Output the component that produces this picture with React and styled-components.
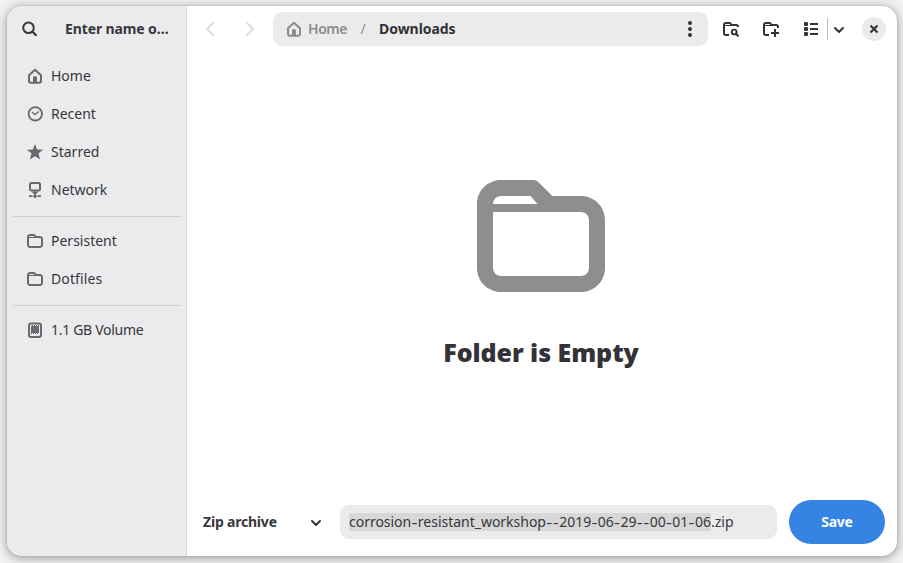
import React from "react";
import styled, { createGlobalStyle } from "styled-components";

const GlobalStyle = createGlobalStyle`
  * { box-sizing: border-box; }
  html, body, #root { height: 100%; }
  body {
    margin: 0;
    overflow: hidden;
    background: #f2f2f2;
    color: #37373b;
    font-family: "Noto Sans", "Open Sans", sans-serif;
    font-size: 14px;
    line-height: 20px;
  }
  button { font: inherit; color: inherit; border: 0; padding: 0; background: none; }
`;

const Desktop = styled.div`
  height: 100%;
  padding: 6px 6px 7px 7px;
`;

const Dialog = styled.div`
  display: flex;
  height: 100%;
  border-radius: 15px;
  overflow: hidden;
  background: #fff;
  box-shadow: 0 0 2px rgba(0, 0, 0, 0.15), 0 2px 9px 1px rgba(0, 0, 0, 0.26), 0 0 16px 2px rgba(0, 0, 0, 0.07);
`;

const Sidebar = styled.aside`
  width: 180px;
  flex: none;
  background: #ebebed;
  border-right: 1px solid #dadadc;
`;

const SidebarHeader = styled.header`
  display: flex;
  align-items: center;
  height: 46px;
  padding-left: 14px;
  margin-bottom: 5px;
`;

const Title = styled.h1`
  margin: 0 0 0 28px;
  font-size: 14px;
  font-weight: 700;
  white-space: nowrap;
`;

const Text = styled.span`
  letter-spacing: ${(p) => p.$track || 0}px;
  white-space: nowrap;
`;

const Place = styled.div`
  display: flex;
  align-items: center;
  gap: 8px;
  height: 38px;
  padding-left: 20px;
  svg { color: #69696d; }
`;

const Separator = styled.hr`
  height: 1px;
  margin: 7px 5px 5px 6px;
  border: 0;
  background: #cfcfd1;
`;

const Main = styled.main`
  display: flex;
  flex: 1;
  flex-direction: column;
  min-width: 0;
`;

const Toolbar = styled.header`
  display: flex;
  align-items: center;
  height: 46px;
`;

const IconButton = styled.button`
  display: flex;
  align-items: center;
  justify-content: center;
  flex: none;
  width: ${(p) => p.$w || 40}px;
  height: 34px;
  color: ${(p) => (p.disabled ? "#dcdcdd" : "#323237")};
`;

const History = styled.div`
  display: flex;
  padding-left: 3px;
  width: 86px;
`;

const PathBar = styled.nav`
  display: flex;
  align-items: center;
  width: 435px;
  height: 34px;
  margin-right: 3px;
  padding-left: 13px;
  border-radius: 9px;
  background: #ebebeb;
`;

const Crumb = styled.span`
  display: flex;
  align-items: center;
  gap: 6px;
  font-weight: ${(p) => (p.$current ? 700 : 600)};
  color: ${(p) => (p.$current ? "#323237" : "#8c8c8e")};
`;

const Slash = styled.span`
  width: 32px;
  text-align: center;
  color: #909092;
`;

const MenuSlot = styled.div`
  display: flex;
  margin-left: auto;
  margin-right: 1px;
`;

const ViewDivider = styled.span`
  width: 1px;
  height: 22px;
  margin-left: -4px;
  background: #bebec0;
`;

const CloseButton = styled.button`
  display: flex;
  align-items: center;
  justify-content: center;
  width: 24px;
  height: 24px;
  margin-left: 13px;
  border-radius: 50%;
  background: #ebebeb;
`;

const EmptyState = styled.section`
  display: flex;
  flex: 1;
  flex-direction: column;
  align-items: center;
  padding: 120px 2px 0 0;
  svg { color: #8e8e91; }
`;

const EmptyHeading = styled.h2`
  margin: 34px 0 0;
  font-size: 25px;
  line-height: 36px;
  font-weight: 900;
  color: #323237;
`;

const ActionBar = styled.footer`
  display: flex;
  align-items: center;
  height: 68px;
  padding: 0 12px 0 16px;
`;

const FilterButton = styled.button`
  display: flex;
  align-items: center;
  justify-content: space-between;
  width: 121px;
  margin-right: 16px;
  font-weight: 700;
`;

const FilenameField = styled.div`
  display: flex;
  align-items: center;
  width: 437px;
  height: 34px;
  padding-left: 9px;
  border-radius: 9px;
  background: #ebebeb;
`;

const Selection = styled.span`
  display: block;
  width: 362px;
  height: 18px;
  line-height: 18px;
  white-space: nowrap;
  background: #d7d7d7;
`;

const Hyphen = styled.span`
  font-family: Inter, sans-serif;
  letter-spacing: 0.2px;
  line-height: 1;
  vertical-align: -1px;
`;

const SaveButton = styled.button`
  width: 96px;
  height: 44px;
  margin-left: 12px;
  border-radius: 22px;
  background: #3584e4;
  color: #fff;
  font-weight: 700;
`;

const Icon = ({ size = 16, children }) => (
  <svg width={size} height={size} viewBox="0 0 16 16" fill="none" stroke="currentColor" strokeWidth="2">
    {children}
  </svg>
);

const SearchIcon = () => (
  <Icon><circle cx="7.5" cy="6.7" r="5.3" /><path d="m11.5 10.7 3.3 3.3" strokeWidth="2.2" strokeLinecap="round" /></Icon>
);
const HomeIcon = () => (
  <Icon>
    <path d="M2 7.2 8 1.8l6 5.4V12.8q0 2-2 2H4q-2 0-2-2z" strokeLinejoin="round" />
    <path d="M6 15v-5q0-2 2-2t2 2V15z" fill="currentColor" stroke="none" />
  </Icon>
);
const RecentIcon = () => (
  <Icon><circle cx="8.3" cy="7.8" r="6.7" strokeWidth="1.8" /><path d="m5 5.8 2.8 2.8 4.1-3.1" strokeWidth="1.2" /></Icon>
);
const StarIcon = () => (
  <Icon>
    <path
      d="m8 0 2.1 5.4 5.9.3-4.6 3.8 1.8 5.9L8 12.2l-5.2 3.2 1.8-5.9L0 5.7l5.9-.3z"
      fill="currentColor"
      stroke="none"
    />
  </Icon>
);
const NetworkIcon = () => (
  <Icon>
    <rect x="3" y="1" width="10" height="7.5" rx="1.5" />
    <path d="M4.5 9.5h7L9 12v1H7v-1z" fill="currentColor" stroke="none" />
    <path d="M2 14.2h3.5m5 0H14" strokeWidth="1.8" />
    <circle cx="8" cy="14.2" r="1.7" fill="currentColor" stroke="none" />
  </Icon>
);
const FolderIcon = ({ size }) => (
  <Icon size={size}>
    <path
      fill="currentColor"
      stroke="none"
      fillRule="evenodd"
      d="M3 1C1.34 1 0 2.34 0 4v8c0 1.66 1.34 3 3 3h10c1.66 0 3-1.34 3-3V6c0-1.66-1.34-3-3-3H9.42L7.72 1.3A1 1 0 0 0 7 1zM3 3h3.7l.85 1H2c0-.55.45-1 1-1zM2 5h11c.55 0 1 .45 1 1v6c0 .55-.45 1-1 1H3c-.55 0-1-.45-1-1z"
    />
  </Icon>
);
const VolumeIcon = () => (
  <Icon>
    <rect x="2" y="1.5" width="12" height="13.5" rx="2" />
    <path d="M4 4h1V3h1v1h1V3h1v1h1V3h1v1h1V3h1v8h-1v1h-1v-1H9v1H8v-1H7v1H6v-1H5v1H4z" fill="currentColor" stroke="none" />
  </Icon>
);
const BackIcon = () => (
  <Icon><path d="m11 2-6 6 6 6" strokeLinecap="round" /></Icon>
);
const ForwardIcon = () => (
  <Icon><path d="m5 2 6 6-6 6" strokeLinecap="round" /></Icon>
);
const MoreIcon = () => (
  <Icon>
    <g fill="currentColor" stroke="none">
      <circle cx="8" cy="2" r="2" /><circle cx="8" cy="8" r="2" /><circle cx="8" cy="14" r="2" />
    </g>
  </Icon>
);
const FolderSearchIcon = () => (
  <Icon>
    <path d="M6 14H3q-2 0-2-2V4q0-2 2-2h3.8l2 2H13q2 0 2 1.7V6" />
    <path d="M1 4.5h8" strokeWidth="1" />
    <circle cx="11.2" cy="11" r="2.4" strokeWidth="1.9" />
    <path d="m13 12.8 2.6 2.7" />
  </Icon>
);
const FolderNewIcon = () => (
  <Icon>
    <path d="M6 14H3q-2 0-2-2V4q0-2 2-2h3.8l2 2H13q2 0 2 2v1" />
    <path d="M1 4.5h8" strokeWidth="1" />
    <path d="M12 8v8M8 12h8" />
  </Icon>
);
const ListIcon = () => (
  <Icon>
    <g fill="currentColor" stroke="none">
      <rect x="1" y="1" width="4" height="4" rx="1" /><rect x="1" y="6" width="4" height="4" rx="1" />
      <rect x="1" y="11" width="4" height="4" rx="1" />
    </g>
    <path d="M7 3h8M7 8h8M7 13h8" />
  </Icon>
);
const ChevronDown = () => (
  <Icon><path d="m4 7 4 4 4-4" strokeLinecap="round" strokeLinejoin="round" /></Icon>
);
const CloseIcon = () => (
  <Icon><path d="m4.5 4.5 7 7m0-7-7 7" strokeWidth="2.2" /></Icon>
);

const PLACES = [
  [
    { label: "Home", Glyph: HomeIcon, track: 0 },
    { label: "Recent", Glyph: RecentIcon, track: 0 },
    { label: "Starred", Glyph: StarIcon, track: 0 },
    { label: "Network", Glyph: NetworkIcon, track: 0 },
  ],
  [
    { label: "Persistent", Glyph: FolderIcon, track: 0 },
    { label: "Dotfiles", Glyph: FolderIcon, track: 0.1 },
  ],
  [{ label: "1.1 GB Volume", Glyph: VolumeIcon, track: -0.3 }],
];

const Filename = ({ name }) => (
  <Text $track={-0.02}>
    {name.split(/(-)/).map((part, i) => (part === "-" ? <Hyphen key={i}>-</Hyphen> : part))}
  </Text>
);

export default function App() {
  return (
    <>
      <GlobalStyle />
      <Desktop>
        <Dialog>
          <Sidebar>
            <SidebarHeader>
              <SearchIcon />
              <Title><Text $track={-0.12}>Enter name o…</Text></Title>
            </SidebarHeader>
            {PLACES.map((group, i) => (
              <React.Fragment key={i}>
                {i > 0 && <Separator />}
                {group.map(({ label, Glyph, track }) => (
                  <Place key={label}><Glyph /><Text $track={track}>{label}</Text></Place>
                ))}
              </React.Fragment>
            ))}
          </Sidebar>
          <Main>
            <Toolbar>
              <History>
                <IconButton disabled aria-label="Back"><BackIcon /></IconButton>
                <IconButton disabled aria-label="Forward"><ForwardIcon /></IconButton>
              </History>
              <PathBar>
                <Crumb><HomeIcon /><Text $track={-0.45}>Home</Text></Crumb>
                <Slash>/</Slash>
                <Crumb $current><Text $track={-0.05}>Downloads</Text></Crumb>
                <MenuSlot><IconButton $w={34} aria-label="Menu"><MoreIcon /></IconButton></MenuSlot>
              </PathBar>
              <IconButton aria-label="Search"><FolderSearchIcon /></IconButton>
              <IconButton aria-label="New folder"><FolderNewIcon /></IconButton>
              <IconButton aria-label="List view"><ListIcon /></IconButton>
              <ViewDivider />
              <IconButton $w={21} aria-label="View options"><ChevronDown /></IconButton>
              <CloseButton aria-label="Close"><CloseIcon /></CloseButton>
            </Toolbar>
            <EmptyState>
              <FolderIcon size={128} />
              <EmptyHeading><Text $track={-0.05}>Folder is Empty</Text></EmptyHeading>
            </EmptyState>
            <ActionBar>
              <FilterButton><Text $track={-0.2}>Zip archive</Text><ChevronDown /></FilterButton>
              <FilenameField>
                <Selection><Filename name="corrosion-resistant_workshop--2019-06-29--00-01-06" /></Selection>
                <Text>.zip</Text>
              </FilenameField>
              <SaveButton><Text $track={-0.3}>Save</Text></SaveButton>
            </ActionBar>
          </Main>
        </Dialog>
      </Desktop>
    </>
  );
}
